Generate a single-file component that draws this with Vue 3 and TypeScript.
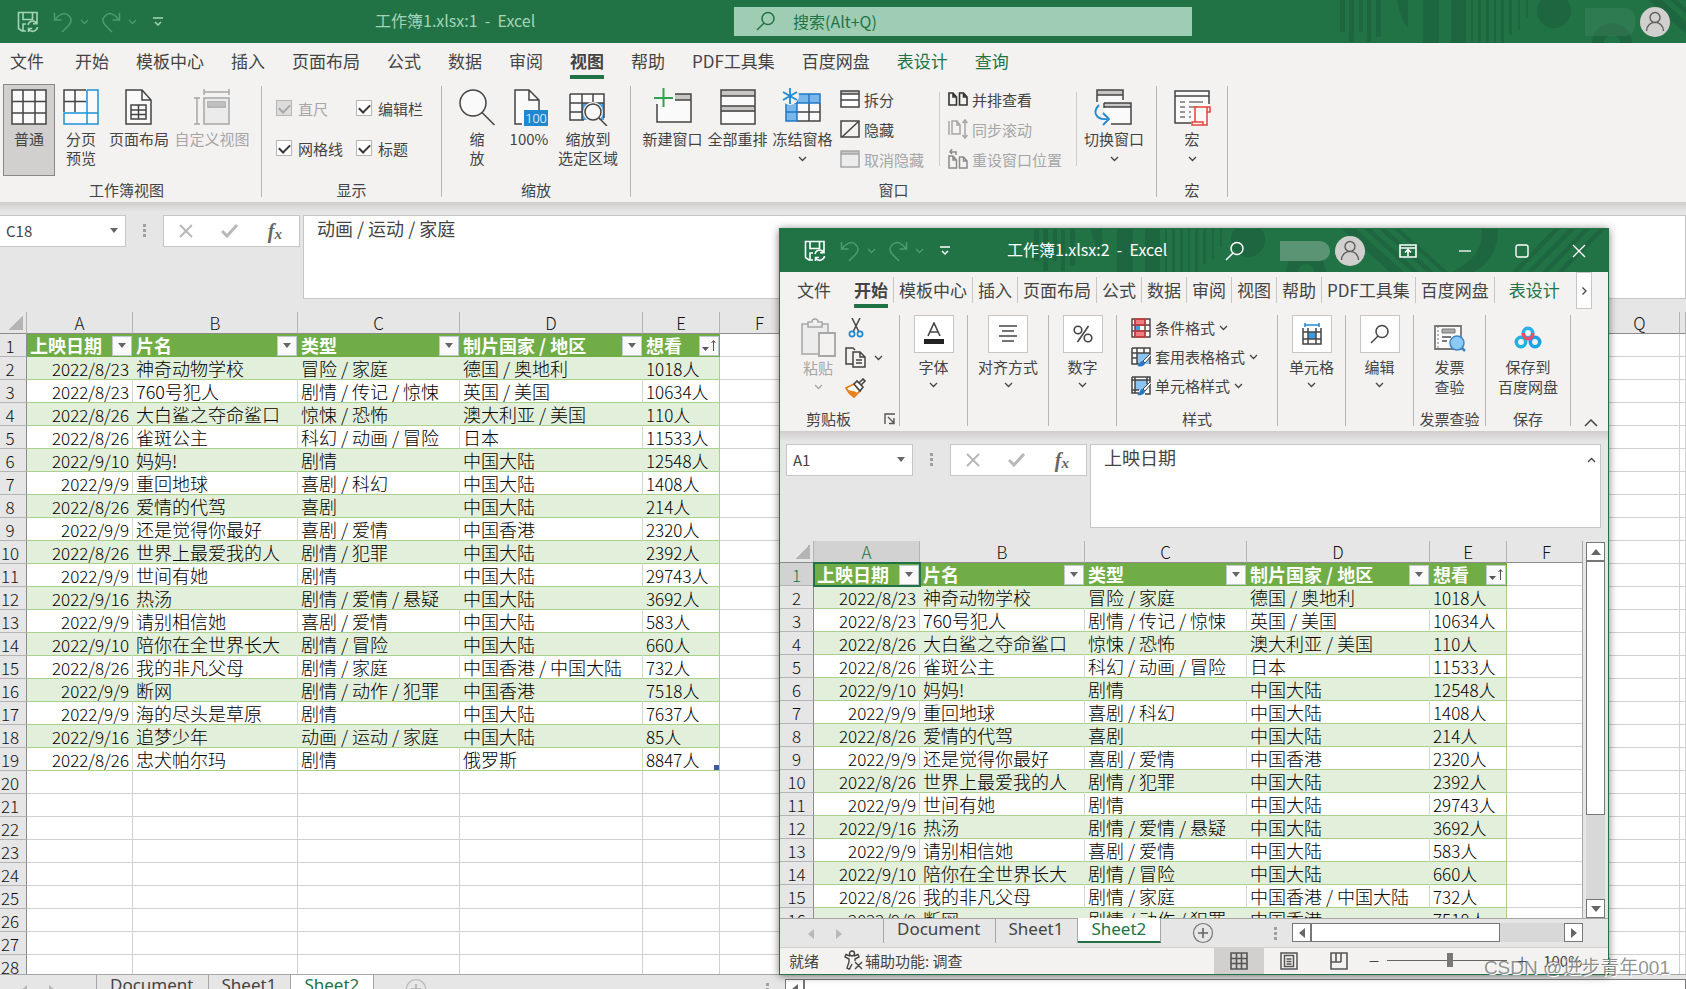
<script setup lang="ts">
import { defineComponent, h, ref } from 'vue'

interface Movie { date: string; name: string; kind: string; area: string; want: string }

const raw: string[] = [
  '2022/8/23|神奇动物学校|冒险 / 家庭|德国 / 奥地利|1018人',
  '2022/8/23|760号犯人|剧情 / 传记 / 惊悚|英国 / 美国|10634人',
  '2022/8/26|大白鲨之夺命鲨口|惊悚 / 恐怖|澳大利亚 / 美国|110人',
  '2022/8/26|雀斑公主|科幻 / 动画 / 冒险|日本|11533人',
  '2022/9/10|妈妈!|剧情|中国大陆|12548人',
  '2022/9/9|重回地球|喜剧 / 科幻|中国大陆|1408人',
  '2022/8/26|爱情的代驾|喜剧|中国大陆|214人',
  '2022/9/9|还是觉得你最好|喜剧 / 爱情|中国香港|2320人',
  '2022/8/26|世界上最爱我的人|剧情 / 犯罪|中国大陆|2392人',
  '2022/9/9|世间有她|剧情|中国大陆|29743人',
  '2022/9/16|热汤|剧情 / 爱情 / 悬疑|中国大陆|3692人',
  '2022/9/9|请别相信她|喜剧 / 爱情|中国大陆|583人',
  '2022/9/10|陪你在全世界长大|剧情 / 冒险|中国大陆|660人',
  '2022/8/26|我的非凡父母|剧情 / 家庭|中国香港 / 中国大陆|732人',
  '2022/9/9|断网|剧情 / 动作 / 犯罪|中国香港|7518人',
  '2022/9/9|海的尽头是草原|剧情|中国大陆|7637人',
  '2022/9/16|追梦少年|动画 / 运动 / 家庭|中国大陆|85人',
  '2022/8/26|忠犬帕尔玛|剧情|俄罗斯|8847人',
]
const movies: Movie[] = raw.map((line) => {
  const [date, name, kind, area, want] = line.split('|')
  return { date, name, kind, area, want }
})
const fields = ['上映日期', '片名', '类型', '制片国家 / 地区', '想看']
const mainTail = ['F', 'G', 'H', 'I', 'J', 'K', 'L', 'M', 'N', 'O', 'P', 'Q', '']
const letters = ['A', 'B', 'C', 'D', 'E']
const mainTabs = ['文件', '开始', '模板中心', '插入', '页面布局', '公式', '数据', '审阅', '视图', '帮助', 'PDF工具集', '百度网盘', '表设计', '查询']
const subTabs = ['开始', '模板中心', '插入', '页面布局', '公式', '数据', '审阅', '视图', '帮助', 'PDF工具集', '百度网盘']
const sheets = ['Document', 'Sheet1', 'Sheet2']
const showBar = ref(true)
const showGrid = ref(true)
const showHeads = ref(true)
const zoom = ref(53)

const K = 'stroke="#444" stroke-width="1.5" fill="none"'
const G = 'stroke="#a6a6a6" stroke-width="1.5" fill="none"'
const icons: Record<string, [number, number, string]> = {
  save: [22, 22, '<g fill="none" stroke="currentColor" stroke-width="1.6"><path d="M9 20H5L1.500 17.500V1.500H20V9M6 2V8.500H15.500V2M6 20V13H9"/><path d="M11 14A4.800 4.800 0 0 1 19.500 12M20 9V12.800H16M20.500 16A4.800 4.800 0 0 1 12 18.500M11.500 21V17.500H15.200"/></g>'],
  undo: [20, 22, '<path d="M1.500 2V9H8.500M2 9C6 3 11 1 15 4C20 8 18 12 15 15L9 21" fill="none" stroke="currentColor" stroke-width="1.500"/>'],
  redo: [20, 22, '<path d="M18.500 2V9H11.500M18 9C14 3 9 1 5 4C0 8 2 12 5 15L11 21" fill="none" stroke="currentColor" stroke-width="1.500"/>'],
  chev: [9, 6, '<path d="M1 1L4.500 4.500L8 1" fill="none" stroke="currentColor" stroke-width="1.300"/>'],
  up: [14, 8, '<path d="M1 7L7 1L13 7" fill="none" stroke="currentColor" stroke-width="1.500"/>'],
  custom: [12, 10, '<path d="M1 1H11M3 5L6 8L9 5" fill="none" stroke="currentColor" stroke-width="1.500"/>'],
  search: [20, 20, '<g fill="none" stroke="currentColor" stroke-width="1.500"><circle cx="12" cy="7.500" r="6"/><path d="M8 12L1 19"/></g>'],
  user: [30, 30, '<circle cx="15" cy="15" r="15" fill="#d2d0ce"/><g fill="none" stroke="#605e5c" stroke-width="1.400"><circle cx="15" cy="10.500" r="5"/><path d="M6.500 24C7 12.500 23 12.500 23.500 24"/></g>'],
  normal: [38, 38, `<path d="M2 2H36V36H2Z" fill="#fafafa"/><path d="M2 2H36V36H2ZM13 2V36M25 2V36M2 13.500H36M2 25H36" ${K}/>`],
  pages: [38, 38, `<path d="M2 2H36V36H2Z" fill="#fafafa"/><path d="M24 2H2V24M13 2V24M2 13.500H24" ${K}/><path d="M25 2H36V36H2V25H36M25 2V36" stroke="#1e91d6" stroke-width="1.500" fill="none"/>`],
  layout: [38, 38, `<path d="M6 2H22L31 12V36H6Z" fill="#fafafa"/><path d="M6 2H22L31 12V36H6ZM22 2V12H31" ${K}/><path d="M11 17H26V31H11ZM18.500 17V31M11 22H26M11 26.500H26" ${K}/>`],
  custview: [38, 38, `<path d="M10 10H36V36H10Z" fill="#ebebeb"/><path d="M11 10H36V36H11ZM15 14H32V19H15ZM11 4H36M11 1V7M36 1V7M4 10V36M1 10H7M1 36H7" ${G}/><path d="M15 14H32V18H15Z" fill="#c0c0c0"/>`],
  zoomer: [36, 38, `<ellipse cx="14" cy="15" rx="13" ry="13" fill="#fafafa"/><circle cx="14" cy="15" r="13" ${K}/><path d="M23 24.500L35.500 37" ${K}/>`],
  hundred: [38, 38, `<path d="M5 2H19L29 12V36H5Z" fill="#fafafa"/><path d="M12 36H5V2H19L29 12V22M19 2V12H29" ${K}/><path d="M14 22H38V38H14Z" fill="#2088cf"/><text x="26" y="35" fill="#fff" font-size="13" font-weight="300" text-anchor="middle" font-family="Roboto, sans-serif">100</text>`],
  zoomsel: [40, 38, `<path d="M2 6H36V32H2Z" fill="#fafafa"/><path d="M14 15H36V32H14Z" fill="#4aa0e0"/><path d="M2 6H36V15M14 6V32M25 6V15M2 15H36M2 24H14M2 6V32H16M36 15V30" ${K}/><circle cx="25" cy="24" r="10" fill="#f3f2f1"/><circle cx="25" cy="24" r="8" fill="#fafafa"/><circle cx="25" cy="24" r="8" ${K}/><path d="M31 30L39 38" ${K}/>`],
  newwin: [42, 38, `<path d="M5 12V34H39V6H23V12H39" fill="#fafafa"/><path d="M23 6H39V12H23Z" fill="#c8c6c4"/><path d="M5 16V34H39V6H23M23 12H39" ${K}/><path d="M2 10H21M11.500 0V19" stroke="#2da44e" stroke-width="2"/>`],
  arrange: [38, 38, `<path d="M2 2H36V36H2Z" fill="#fafafa"/><path d="M2 2H36V8H2ZM2 18H36V24H2Z" fill="#c8c6c4"/><path d="M2 2H36V36H2ZM2 8H36M2 18H36M2 23H36" ${K}/>`],
  freeze: [42, 38, `<path d="M4 6H38V33H4Z" fill="#fafafa"/><path d="M15 6H38V15H15ZM4 15H15V33H4Z" fill="#79b7ea"/><path d="M15 33H38V15M15 24H38M27 15V33" ${K}/><path d="M16 6H38V15H4V33H15V6M27 6V15M4 24H15" stroke="#1f78c8" stroke-width="1.500" fill="none"/><circle cx="8" cy="8" r="9" fill="#f3f2f1"/><path d="M8 0V16M1 4L15 12M1 12L15 4" stroke="#2088cf" stroke-width="1.800"/>`],
  split: [20, 20, `<path d="M1 2H19V18H1Z" fill="#fff"/><path d="M1 2H19V5H1Z" fill="#c8c6c4"/><path d="M1 2H19V18H1ZM1 5H19M1 11H19" ${K}/>`],
  hide: [20, 20, `<path d="M1 2H19V18H1ZM2 18L18 3" ${K}/>`],
  unhide: [20, 20, `<path d="M1 2H19V18H1Z" fill="#ececec"/><path d="M1 2H19V5H1Z" fill="#c8c6c4"/><path d="M1 2H19V18H1ZM1 5H19" ${G}/>`],
  side: [20, 20, `<path d="M1 4H5L8.500 8V16H1ZM5 4V8H8.500M11.500 4H15.500L19 8V16H11.500ZM15.500 4V8H19" stroke="#333" stroke-width="1.600" fill="none"/>`],
  sync: [20, 20, `<path d="M1 2V16M4 2H9L12 6V15H4ZM9 2V6H12M17 1V19M14.500 4L17 1L19.500 4M14.500 16L17 19L19.500 16" ${G}/>`],
  reset: [20, 20, `<path d="M1 7H5L8.500 11V19H1ZM5 7V11H8.500M11.500 8H15.500L19 12V19H11.500ZM15.500 8V12H19M2 3H8V6M4 0L2 3L4 5" stroke="#8a8a8a" stroke-width="1.500" fill="none"/>`],
  switchw: [42, 38, `<path d="M4 2H30V17H12V24" fill="#fafafa"/><path d="M4 2H30V7H4ZM12 15H38V19H12Z" fill="#c8c6c4"/><path d="M12 19H38V36H12Z" fill="#fafafa"/><path d="M4 14V2H30V12M4 7H30M11 15H38V36H18M11 15V20M11 19H38" ${K}/><path d="M6 17C-1 24 3 32 14 31M10 25L16 31L10 37" stroke="#2088cf" stroke-width="1.800" fill="none"/>`],
  macro: [38, 38, `<path d="M2 3H36V35H2Z" fill="#fafafa"/><path d="M36 16V3H2V35H18M2 8H36" ${K}/><path d="M7 14H12M16 14H30M7 19H12M16 19H24M7 24H12M16 24H18M7 29H12M16 29H18" stroke="#777" stroke-width="1.500"/><path d="M22 34V19H37V24H34V37H19V34H30V37M34 19V24" stroke="#e8403a" stroke-width="1.500" fill="#fafafa"/>`],
  x: [16, 14, '<path d="M2 1L14 13M14 1L2 13" stroke="#b8b8b8" stroke-width="2"/>'],
  ok: [18, 14, '<path d="M1 7L6 12L16 1" stroke="#b8b8b8" stroke-width="3" fill="none"/>'],
  drop: [8, 5, '<path d="M0 0H8L4 5Z" fill="#666"/>'],
  tl: [6, 10, '<path d="M6 0V10L0 5Z" fill="currentColor"/>'],
  tr: [6, 10, '<path d="M0 0V10L6 5Z" fill="currentColor"/>'],
  tu: [10, 6, '<path d="M0 6H10L5 0Z" fill="#666"/>'],
  td: [10, 6, '<path d="M0 0H10L5 6Z" fill="#666"/>'],
  sort: [16, 14, '<path d="M1 8H8L4.500 12Z" fill="#555"/><path d="M12.500 12V2M10.500 4L12.500 1.500L14.500 4" stroke="#555" fill="none"/>'],
  plus: [22, 22, '<circle cx="11" cy="11" r="9.500" fill="none" stroke="#777" stroke-width="1.200"/><path d="M6 11H16M11 6V16" stroke="#666" stroke-width="1.600"/>'],
  paste: [36, 40, `<path d="M2 6H28V36H2Z" fill="#ececec"/><path d="M18 36H2V6H8M22 6H28V14M8 9V4H12C12 0 18 0 18 4H22V9Z" ${G}/><path d="M19 15H35V38H19Z" fill="#f3f2f1" stroke="#a6a6a6" stroke-width="1.800"/>`],
  cut: [16, 20, '<path d="M4 0L11 14M12 0L5 14" stroke="#444" stroke-width="1.500"/><circle cx="4" cy="16" r="2.600" stroke="#2088cf" stroke-width="1.700" fill="none"/><circle cx="12" cy="16" r="2.600" stroke="#2088cf" stroke-width="1.700" fill="none"/>'],
  copy: [22, 22, `<path d="M8 17H1V1H8L10 3M8 5H15L20 10V20H8ZM15 5V10H20M11 13H17M11 16H17" ${K}/>`],
  brush: [22, 20, '<path d="M1 10L9 6L15 13L9 19C6 17 3 14 1 10Z" fill="#fff" stroke="#e8811a" stroke-width="1.800"/><path d="M3 12L12 14L9 19Z" fill="#e8811a"/><path d="M9 6L12 3L18 9L15 13ZM14 5L18 1L20 3L16 7" fill="#fff" stroke="#444" stroke-width="1.600"/>'],
  launch: [12, 12, '<path d="M1 11V1H11M4 4L10 10M10 5V10.500H5" stroke="#555" stroke-width="1.400" fill="none"/>'],
  font: [24, 24, '<path d="M6 14L12 1L18 14M8 10H16" stroke="#444" stroke-width="1.600" fill="none"/><path d="M2 17H22V22H2Z" fill="#222"/>'],
  align: [24, 24, '<path d="M3 4H21M6 9H18M3 14H21M6 19H18" stroke="#444" stroke-width="1.500"/>'],
  percent: [24, 24, '<g fill="none" stroke="#444" stroke-width="1.600"><circle cx="7" cy="8" r="3.800"/><circle cx="17" cy="16" r="3.800"/><path d="M17.500 4L6.500 20"/></g>'],
  cells: [24, 24, '<path d="M3 6H21V22H3Z" fill="#fafafa"/><path d="M8 10H16V17H8Z" fill="#3d9be0"/><path d="M3 6V22H21V6M3 10H21M3 17H21M8 6V22M16 6V22" stroke="#444" stroke-width="1.500" fill="none"/><path d="M5 3H19M5 1V5M19 1V5" stroke="#2088cf" stroke-width="1.500"/>'],
  cond: [20, 20, '<path d="M1 1H19V19H1Z" fill="#fff"/><path d="M4 1H14V7H4ZM4 13H14V19H4Z" fill="#f08080"/><path d="M4 7H9V13H4Z" fill="#4a9be0"/><path d="M1 1H19V19H1ZM4 1V19M14 1V19M1 7H19M1 13H19" stroke="#444" stroke-width="1.400" fill="none"/><path d="M4 1H14V7H4ZM4 13H14V19H4Z" stroke="#d83b3b" stroke-width="1.400" fill="none"/>'],
  tstyle: [20, 20, '<path d="M1 1H19V17H1Z" fill="#fff"/><path d="M6 6H19V17H6Z" fill="#8cc4f0"/><path d="M1 1H19V17M1 1V17H8M6 1V17M13 1V6M1 6H19M1 11H6" stroke="#444" stroke-width="1.500" fill="none"/><path d="M19 7L12 14L14 16L20 9" fill="#fff" stroke="#444"/><path d="M11 14C8 15 9 18 6 19C10 20 14 19 14 16Z" fill="#1f78c8"/>'],
  cstyle: [20, 20, '<path d="M1 1H19V17H1Z" fill="#fff"/><path d="M4 4H16V14H4Z" fill="#8cc4f0"/><path d="M1 1H19V18H14M1 1V17H8M4 1V17M1 4H19M16 1V8M1 14H8" stroke="#444" stroke-width="1.500" fill="none"/><path d="M19 6L12 13L14 15L20 8" fill="#fff" stroke="#444"/><path d="M11 13C8 14 9 18 6 19C10 20 14 18 14 15Z" fill="#1f78c8"/>'],
  invoice: [34, 28, '<path d="M2 2H28V25H2Z" fill="#fafafa" stroke="#777" stroke-width="1.800"/><path d="M5 2V25" stroke="#777" stroke-dasharray="2 2"/><path d="M9 5H22V9H9Z" fill="#aaa" stroke="#777"/><path d="M9 13H18M9 17H14" stroke="#777" stroke-width="1.800"/><path d="M28 23L32 27" stroke="#3b86c8" stroke-width="2.500"/><circle cx="24" cy="19" r="7" fill="#8cc8f8" stroke="#3b86c8" stroke-width="1.500"/>'],
  baidu: [28, 24, '<g fill="none" stroke-width="3.600"><circle cx="7" cy="16" r="4.700" stroke="#1fb4e0"/><circle cx="21" cy="16" r="4.700" stroke="#1ba0ea"/><circle cx="14" cy="7" r="4.700" stroke="#2bb0ee"/><path d="M9.300 7V8A4.700 4.700 0 0 0 18.700 8V7" stroke="#e8506a"/></g>'],
  ribbonopt: [18, 16, '<path d="M1 2H17V14H1ZM1 5H17" fill="none" stroke="#fff" stroke-width="1.600"/><path d="M9 13V7M6 9.500L9 6.500L12 9.500" fill="none" stroke="#fff" stroke-width="1.600"/>'],
  min: [14, 14, '<path d="M1 7H13" stroke="#fff" stroke-width="1.300"/>'],
  max: [14, 14, '<rect x="1" y="1" width="12" height="12" rx="2" fill="none" stroke="#fff" stroke-width="1.400"/>'],
  close: [14, 14, '<path d="M1 1L13 13M13 1L1 13" stroke="#fff" stroke-width="1.400"/>'],
  access: [20, 20, '<g fill="none" stroke="#444" stroke-width="1.400"><circle cx="8" cy="3.500" r="2.500"/><path d="M6 6L2 4.500L1 7L5 9V12L3 18L5.500 19L8 14M10 6L14 4.500L15 7L11 9V11M11 12L18 19M18 12L11 19"/></g>'],
  vnormal: [18, 18, '<path d="M1 1H17V17H1ZM6.500 1V17M11.500 1V17M1 6.500H17M1 11.500H17" fill="none" stroke="#555" stroke-width="1.600"/>'],
  vpage: [18, 18, '<path d="M1 1H17V17H1ZM4.500 3.500H13.500V14.500H4.500ZM6.500 7H11.500M6.500 9.500H11.500M6.500 12H11.500" fill="none" stroke="#555" stroke-width="1.500"/>'],
  vbreak: [18, 18, '<path d="M1 1H17V17H1ZM6 1V10M11 1V10M1 10H11" fill="none" stroke="#555" stroke-width="1.600"/>'],
  decor: [580, 43, '<g fill="#0f3d2a" fill-opacity=".24"><path d="M0 0H5V32H0ZM9 0H14V42H9ZM19 0H23V32H19ZM27 0H31V42H27ZM36 0H41V37H36ZM57 0H68V28Q60 18 57 0ZM83 0H99V43H83ZM111 0H126V43H111ZM131 0H133V43H131ZM138 0H141V43H138ZM146 0H149V43H146ZM154 0H156V43H154ZM161 0H164V43H161ZM169 0H172V35H169ZM178 0H180V30H178ZM186 0H188V18H186Z"/><circle cx="214" cy="11" r="17"/><path d="M252 43A20 20 0 0 1 292 43H280A8 8 0 0 0 264 43Z"/><path d="M308 0H322L370 43H356ZM330 0H337L385 43H378ZM345 0H352L400 43H393ZM360 0H366L414 43H408Z"/><path d="M448 0H464Q464 30 440 43H418Q450 28 448 0ZM478 43L520 0H526L484 43ZM493 43L535 0H541L499 43ZM508 43L550 0H556L514 43ZM523 43L565 0H571L529 43Z"/></g>'],
}
const Ico = defineComponent({
  props: { n: { type: String, required: true } },
  setup(p) {
    return () => {
      const [w, ht, body] = icons[p.n]
      return h('svg', { width: w, height: ht, viewBox: `0 0 ${w} ${ht}`, 'aria-hidden': 'true', innerHTML: body })
    }
  },
})
</script>

<template>
  <div class="desk">
    <section class="win">
      <header class="title inactive">
        <Ico n="decor" class="decor" />
        <div class="quick">
          <button aria-label="保存"><Ico n="save" /></button>
          <button class="dim undo" aria-label="撤消"><Ico n="undo" /><Ico n="chev" /></button>
          <button class="dim redo" aria-label="恢复"><Ico n="redo" /><Ico n="chev" /></button>
          <button aria-label="自定义"><Ico n="custom" /></button>
        </div>
        <h1 class="name">工作簿1.xlsx:1&nbsp; -&nbsp; Excel</h1>
        <label class="find"><Ico n="search" /><input type="text" placeholder="搜索(Alt+Q)" aria-label="搜索" /></label>
        <span class="mask faint"></span>
        <button class="user" aria-label="帐户"><Ico n="user" /></button>
      </header>
      <nav class="tabs">
        <button v-for="t in mainTabs" :key="t" :class="{ on: t === '视图', ctx: t === '表设计' || t === '查询' }">{{ t }}</button>
      </nav>
      <div class="ribbon">
        <div class="group g-view">
          <div class="body">
            <button class="big w52 pressed"><Ico n="normal" /><span>普通</span></button>
            <button class="big w52"><Ico n="pages" /><span>分页<br />预览</span></button>
            <button class="big w64"><Ico n="layout" /><span>页面布局</span></button>
            <button class="big w82 off" disabled><Ico n="custview" /><span>自定义视图</span></button>
          </div>
          <div class="cap">工作簿视图</div>
        </div>
        <i class="sep"></i>
        <div class="group g-show">
          <div class="body checks">
            <label class="off"><input type="checkbox" checked disabled />直尺</label>
            <label><input v-model="showBar" type="checkbox" />编辑栏</label>
            <label><input v-model="showGrid" type="checkbox" />网格线</label>
            <label><input v-model="showHeads" type="checkbox" />标题</label>
          </div>
          <div class="cap">显示</div>
        </div>
        <i class="sep"></i>
        <div class="group g-zoom">
          <div class="body">
            <button class="big w46"><Ico n="zoomer" /><span>缩<br />放</span></button>
            <button class="big w58"><Ico n="hundred" /><span>100%</span></button>
            <button class="big w60"><Ico n="zoomsel" /><span>缩放到<br />选定区域</span></button>
          </div>
          <div class="cap">缩放</div>
        </div>
        <i class="sep"></i>
        <div class="group g-win">
          <div class="body">
            <button class="big w65"><Ico n="newwin" /><span>新建窗口</span></button>
            <button class="big w65"><Ico n="arrange" /><span>全部重排</span></button>
            <button class="big w65"><Ico n="freeze" /><span>冻结窗格</span><Ico n="chev" class="cv" /></button>
            <div class="smalls">
              <button><Ico n="split" />拆分</button>
              <button><Ico n="hide" />隐藏</button>
              <button class="off" disabled><Ico n="unhide" />取消隐藏</button>
            </div>
            <i class="sep inner"></i>
            <div class="smalls second">
              <button><Ico n="side" />并排查看</button>
              <button class="off" disabled><Ico n="sync" />同步滚动</button>
              <button class="off" disabled><Ico n="reset" />重设窗口位置</button>
            </div>
            <i class="sep inner"></i>
            <button class="big w74"><Ico n="switchw" /><span>切换窗口</span><Ico n="chev" class="cv" /></button>
          </div>
          <div class="cap">窗口</div>
        </div>
        <i class="sep"></i>
        <div class="group g-macro">
          <div class="body">
            <button class="big w70"><Ico n="macro" /><span>宏</span><Ico n="chev" class="cv" /></button>
          </div>
          <div class="cap">宏</div>
        </div>
        <i class="sep"></i>
      </div>
      <div class="fbar">
        <div class="nbox"><input value="C18" aria-label="名称框" /><button aria-label="名称列表"><Ico n="drop" /></button></div>
        <i class="dots"></i>
        <div class="fxbox"><button aria-label="取消"><Ico n="x" /></button><button aria-label="输入"><Ico n="ok" /></button><button class="fx" aria-label="插入函数">f<sub>x</sub></button></div>
        <textarea class="formula" aria-label="编辑栏" value="动画 / 运动 / 家庭"></textarea>
      </div>
      <div class="grid">
        <table class="sheet">
          <colgroup><col class="rh" /><col class="ca" /><col class="cb" /><col class="cc" /><col class="cd" /><col class="ce" /><col v-for="c in mainTail" :key="c" :class="{ cf: c }" /></colgroup>
          <thead>
            <tr><th class="corner"></th><th v-for="c in letters.concat(mainTail)" :key="c">{{ c }}</th></tr>
          </thead>
          <tbody>
            <tr class="fields">
              <th>1</th>
              <td v-for="(f, i) in fields" :key="f"><div>{{ f }}<button :aria-label="'筛选 ' + f"><Ico :n="i === 4 ? 'sort' : 'drop'" /></button></div></td>
              <td v-for="c in mainTail" :key="c"></td>
            </tr>
            <tr v-for="(m, i) in movies" :key="m.name" class="rec" :class="{ band: i % 2 === 0 }">
              <th>{{ i + 2 }}</th>
              <td class="date">{{ m.date }}</td><td>{{ m.name }}</td><td>{{ m.kind }}</td><td>{{ m.area }}</td><td class="num" :class="{ endmark: i === 17 }">{{ m.want }}</td>
              <td v-for="c in mainTail" :key="c"></td>
            </tr>
            <tr v-for="r in 9" :key="r"><th>{{ r + 19 }}</th><td v-for="c in 18" :key="c"></td></tr>
          </tbody>
        </table>
      </div>
      <footer class="books">
        <span class="arrows"><Ico n="tl" /><Ico n="tr" /></span>
        <button v-for="s in sheets" :key="s" class="stab" :class="{ on: s === 'Sheet2' }">{{ s }}</button>
        <button class="add faded" aria-label="新工作表"><Ico n="plus" /></button>
        <i class="dots"></i>
        <div class="hbar wide"><button aria-label="向左"><Ico n="tl" /></button><div class="thumb"></div></div>
      </footer>
    </section>

    <section class="win float">
      <header class="title">
        <Ico n="decor" class="decor" />
        <div class="quick">
          <button aria-label="保存"><Ico n="save" /></button>
          <button class="dim undo" aria-label="撤消"><Ico n="undo" /><Ico n="chev" /></button>
          <button class="dim redo" aria-label="恢复"><Ico n="redo" /><Ico n="chev" /></button>
          <button aria-label="自定义"><Ico n="custom" /></button>
        </div>
        <h2 class="name">工作簿1.xlsx:2&nbsp; -&nbsp; Excel</h2>
        <button class="lens" aria-label="搜索"><Ico n="search" /></button>
        <span class="mask"></span>
        <button class="user" aria-label="帐户"><Ico n="user" /></button>
        <div class="ctl">
          <button aria-label="功能区显示选项"><Ico n="ribbonopt" /></button>
          <button aria-label="最小化"><Ico n="min" /></button>
          <button aria-label="最大化"><Ico n="max" /></button>
          <button aria-label="关闭"><Ico n="close" /></button>
        </div>
      </header>
      <nav class="tabs tight">
        <button class="file">文件</button>
        <span v-for="t in subTabs" :key="t" class="slot"><button :class="{ on: t === '开始' }">{{ t }}</button></span>
        <button class="ctx">表设计</button>
        <button class="more" aria-label="更多"><Ico n="chev" /></button>
      </nav>
      <div class="ribbon">
        <div class="group f-clip">
          <div class="body clip">
            <button class="pastebtn off" disabled><Ico n="paste" /><span>粘贴</span><Ico n="chev" /></button>
            <div class="cliptools">
              <button aria-label="剪切"><Ico n="cut" /></button>
              <button aria-label="复制"><Ico n="copy" /><Ico n="chev" /></button>
              <button aria-label="格式刷"><Ico n="brush" /></button>
            </div>
          </div>
          <div class="cap">剪贴板<button aria-label="剪贴板选项"><Ico n="launch" /></button></div>
        </div>
        <i class="sep"></i>
        <div class="group"><div class="body"><button class="boxed w67"><b><Ico n="font" /></b>字体<Ico n="chev" /></button></div></div>
        <i class="sep"></i>
        <div class="group"><div class="body"><button class="boxed w80"><b><Ico n="align" /></b>对齐方式<Ico n="chev" /></button></div></div>
        <i class="sep"></i>
        <div class="group"><div class="body"><button class="boxed w67"><b><Ico n="percent" /></b>数字<Ico n="chev" /></button></div></div>
        <i class="sep"></i>
        <div class="group f-style">
          <div class="body styles">
            <button><Ico n="cond" />条件格式<Ico n="chev" /></button>
            <button><Ico n="tstyle" />套用表格格式<Ico n="chev" /></button>
            <button><Ico n="cstyle" />单元格样式<Ico n="chev" /></button>
          </div>
          <div class="cap">样式</div>
        </div>
        <i class="sep"></i>
        <div class="group"><div class="body"><button class="boxed w67"><b><Ico n="cells" /></b>单元格<Ico n="chev" /></button></div></div>
        <i class="sep"></i>
        <div class="group"><div class="body"><button class="boxed w67"><b><Ico n="search" /></b>编辑<Ico n="chev" /></button></div></div>
        <i class="sep"></i>
        <div class="group">
          <div class="body"><button class="plug w71"><Ico n="invoice" /><span>发票<br />查验</span></button></div>
          <div class="cap">发票查验</div>
        </div>
        <i class="sep"></i>
        <div class="group">
          <div class="body"><button class="plug w84"><Ico n="baidu" /><span>保存到<br />百度网盘</span></button></div>
          <div class="cap">保存</div>
        </div>
        <i class="sep"></i>
        <button class="fold" aria-label="折叠功能区"><Ico n="up" /></button>
      </div>
      <div class="fbar">
        <div class="nbox"><input value="A1" aria-label="名称框" /><button aria-label="名称列表"><Ico n="drop" /></button></div>
        <i class="dots"></i>
        <div class="fxbox"><button aria-label="取消"><Ico n="x" /></button><button aria-label="输入"><Ico n="ok" /></button><button class="fx" aria-label="插入函数">f<sub>x</sub></button></div>
        <div class="fwrap"><textarea class="formula" aria-label="编辑栏" value="上映日期"></textarea><button aria-label="折叠编辑栏"><Ico n="chev" /></button></div>
      </div>
      <div class="pane">
        <div class="grid">
          <table class="sheet">
            <colgroup><col class="rh" /><col class="ca" /><col class="cb" /><col class="cc" /><col class="cd" /><col class="ce" /><col class="cf" /></colgroup>
            <thead>
              <tr><th class="corner"></th><th v-for="c in letters" :key="c" :class="{ sel: c === 'A' }">{{ c }}</th><th>F</th></tr>
            </thead>
            <tbody>
              <tr class="fields">
                <th class="sel">1</th>
                <td v-for="(f, i) in fields" :key="f" :class="{ cur: i === 0 }"><div>{{ f }}<button :aria-label="'筛选 ' + f"><Ico :n="i === 4 ? 'sort' : 'drop'" /></button></div></td>
                <td></td>
              </tr>
              <tr v-for="(m, i) in movies.slice(0, 15)" :key="m.name" class="rec" :class="{ band: i % 2 === 0 }">
                <th>{{ i + 2 }}</th>
                <td class="date">{{ m.date }}</td><td>{{ m.name }}</td><td>{{ m.kind }}</td><td>{{ m.area }}</td><td class="num">{{ m.want }}</td><td></td>
              </tr>
            </tbody>
          </table>
        </div>
        <div class="vbar"><button aria-label="向上"><Ico n="tu" /></button><div class="thumb"></div><div class="track"></div><button aria-label="向下"><Ico n="td" /></button></div>
      </div>
      <footer class="books">
        <span class="arrows"><Ico n="tl" /><Ico n="tr" /></span>
        <button v-for="s in sheets" :key="s" class="stab" :class="{ on: s === 'Sheet2' }">{{ s }}</button>
        <button class="add" aria-label="新工作表"><Ico n="plus" /></button>
        <i class="dots"></i>
        <div class="hbar"><button aria-label="向左"><Ico n="tl" /></button><div class="thumb"></div><div class="track"></div><button aria-label="向右"><Ico n="tr" /></button></div>
      </footer>
      <div class="status">
        <span>就绪</span>
        <button class="acc"><Ico n="access" />辅助功能: 调查</button>
        <div class="views">
          <button class="on" aria-label="普通"><Ico n="vnormal" /></button>
          <button aria-label="页面布局"><Ico n="vpage" /></button>
          <button aria-label="分页预览"><Ico n="vbreak" /></button>
        </div>
        <button class="step" aria-label="缩小">−</button>
        <input v-model="zoom" type="range" min="0" max="100" aria-label="缩放" />
        <button class="step" aria-label="放大">+</button>
        <span class="pct">100%</span>
      </div>
    </section>
    <div class="credit">CSDN @进步青年001</div>
  </div>
</template>

<style>
body { overflow: hidden; }
</style>

<style scoped>
.desk, .desk * { box-sizing: border-box; }
.desk { position: relative; height: 100vh; overflow: hidden; font: 15px/19px "Noto Sans CJK SC", "Noto Sans", sans-serif; color: #444; }
button { border: 0; padding: 0; background: none; font: inherit; color: inherit; white-space: nowrap; }
input, textarea { font: inherit; color: inherit; border: 0; padding: 0; outline: 0; background: none; }
svg { display: block; flex: none; }
.win { display: flex; flex-direction: column; height: 100%; background: #f3f2f1; }
.float { position: absolute; left: 779px; top: 228px; width: 830px; height: 747px; border: 1px solid #217346; box-shadow: 0 1px 8px rgba(0, 0, 0, .5); }

.title { position: relative; flex: none; height: 43px; background: #217346; color: #fff; display: flex; align-items: center; overflow: hidden; }
.title.inactive { color: #a5d3b5; }
.decor { position: absolute; left: 1340px; top: 0; }
.float .decor { left: 254px; }
.title > *:not(.decor) { position: relative; }
.quick { display: flex; align-items: center; width: 375px; padding-left: 17px; flex: none; }
.float .quick { width: 227px; padding-left: 24px; }
.quick button { display: flex; align-items: center; }
.quick .dim { color: #4c9c6c; gap: 7px; }
.undo { margin-left: 14px; }
.redo { margin: 0 15px 0 12px; }
.name { margin: 0 0 3px; font-size: 16px; font-weight: 400; line-height: 20px; width: 359px; white-space: nowrap; flex: none; }
.float .name { width: 218px; }
.find { flex: none; width: 458px; height: 29px; background: #9fcdb3; color: #217346; display: flex; align-items: center; gap: 17px; padding: 0 0 1px 22px; font-size: 16px; }
.find input { flex: 1; }
.find input::placeholder { color: #217346; opacity: 1; }
.mask { width: 50px; height: 20px; border-radius: 0 10px 10px 0; background: #5a9474; margin: 0 5px 0 35px; flex: none; }
.mask.faint { margin-left: auto; height: 28px; opacity: .25; }
.inactive .user { margin-right: 16px; }
.ctl { display: flex; margin-left: auto; }
.ctl button { width: 57px; display: grid; place-items: center; }
.float .title { padding-right: 1px; }

.tabs { display: flex; flex: none; height: 36px; margin-bottom: 5px; gap: 27px; padding-left: 10px; font-size: 17px; }
.tabs button { height: 36px; line-height: 34px; padding-bottom: 1px; }
.tabs button:first-child { margin-right: 4px; }
.tabs .on { font-weight: 700; box-shadow: inset 0 -4px #217346; }
.tabs .ctx { color: #217346; }
.tabs.tight { gap: 0; padding-left: 17px; }
.tabs.tight .file { margin-right: 18px; }
.slot { display: flex; padding: 0 5px; border-right: 1px solid transparent; border-image: linear-gradient(transparent 15%, #c8c6c4 15%, #c8c6c4 85%, transparent 85%) 1; }
.tabs .slot button { margin: 0; }
.tabs.tight .ctx { margin-left: 14px; }
.tabs .more { margin-left: auto; margin-right: 16px; width: 16px; height: 37px; padding: 0; border: 1px solid #c8c6c4; background: #fff; display: grid; place-items: center; }
.more svg { transform: rotate(-90deg); }

.ribbon { display: flex; flex: none; height: 118px; }
.sep { flex: none; width: 1px; background: #b8b6b4; margin: 2px 0 5px; }
.sep.inner { align-self: stretch; background: #d0cecc; margin: 8px 0 14px; }
.group { display: flex; flex-direction: column; flex: none; }
.body { height: 96px; display: flex; align-items: flex-start; }
.cap { height: 19px; text-align: center; white-space: nowrap; }
.g-view { width: 261px; }
.g-view .body { padding-left: 3px; }
.g-view .cap { padding-right: 8px; }
.g-show { width: 179px; }
.g-zoom { width: 188px; }
.g-zoom .body { padding-left: 12px; }
.g-win { width: 525px; }
.g-win .body { padding-left: 9px; }
.g-macro { width: 70px; }
.big { height: 92px; display: flex; flex-direction: column; align-items: center; padding-top: 4px; line-height: 19px; }
.big span { margin-top: 3px; }
.cv { margin-top: 8px; }
.pressed { background: #d2d0ce; box-shadow: inset 0 0 0 1px #8a8886; }
.off { color: #a6a6a6; }
.w46 { width: 46px; } .w52 { width: 52px; } .w58 { width: 58px; } .w60 { width: 60px; } .w64 { width: 64px; }
.w65 { width: 65px; } .w67 { width: 67px; } .w70 { width: 70px; } .w71 { width: 71px; } .w74 { width: 74px; } .w80 { width: 80px; } .w82 { width: 82px; } .w84 { width: 84px; }
.checks { display: grid; grid-template: 40px 40px / 80px 1fr; padding: 4px 0 0 14px; }
.checks label { display: flex; align-items: center; gap: 6px; height: 40px; white-space: nowrap; }
.checks input { appearance: none; width: 16px; height: 16px; margin: 0; border: 1px solid #b8b6b4; background: #fff; display: grid; place-items: center; }
.checks input:checked::after { content: ""; width: 9px; height: 5px; border: solid #333; border-width: 0 0 2px 2px; transform: translateY(-1px) rotate(-45deg); }
.checks input:disabled { background: #dcdcdc; }
.checks input:disabled::after { border-color: #a6a6a6; }
.smalls { width: 104px; padding-left: 5px; }
.smalls.second { width: 136px; padding-left: 8px; }
.smalls button { display: flex; align-items: center; gap: 4px; height: 30px; }

.body.clip { padding-left: 20px; gap: 9px; }
.pastebtn { display: flex; flex-direction: column; align-items: center; padding-top: 5px; line-height: 19px; }
.pastebtn svg:last-child { margin-top: 7px; }
.cliptools button { display: flex; align-items: center; height: 30px; gap: 7px; }
.cliptools button:first-child { padding-left: 3px; }
.f-clip { width: 119px; }
.f-clip .cap { display: flex; align-items: center; justify-content: space-between; padding: 0 3px 0 26px; }
.boxed { display: flex; flex-direction: column; align-items: center; padding-top: 2px; line-height: 19px; }
.boxed b { display: grid; place-items: center; width: 40px; height: 38px; background: #fff; border: 1px solid #c8c6c4; margin-bottom: 4px; color: #444; font-weight: 400; }
.boxed svg:last-child { margin-top: 6px; }
.boxed b svg:last-child { margin: 0; }
.f-style { width: 160px; }
.styles { flex-direction: column; padding-left: 14px; }
.styles button { display: flex; align-items: center; gap: 4px; height: 29px; }
.plug { display: flex; flex-direction: column; align-items: center; padding-top: 11px; line-height: 20px; }
.plug svg { height: 28px; margin-bottom: 5px; }
.fold { margin: 106px 10px 0 auto; align-self: flex-start; }

.fbar { flex: none; display: flex; height: 110px; padding-top: 13px; align-items: flex-start; background: linear-gradient(#cfcdcc, #e6e6e6 10px); }
.float .fbar { padding: 13px 7px 0 6px; }
.nbox { width: 127px; height: 32px; background: #fff; border: 1px solid #c6c6c6; display: flex; align-items: center; flex: none; padding: 0 7px 1px 6px; margin-left: -1px; }
.float .nbox { margin-left: 0; }
.nbox input { flex: 1; min-width: 0; }
.fbar .dots { width: 37px; height: 31px; }
.dots { background: radial-gradient(circle, #a0a0a0 2px, transparent 2px) center top / 5px 5px repeat-y content-box; padding: 8px 0; flex: none; }
.fxbox { width: 137px; height: 32px; background: #fff; border: 1px solid #c6c6c6; display: flex; flex: none; margin-right: 3px; padding-right: 2px; }
.fxbox button { flex: 1; display: grid; place-items: center; }
.fxbox .fx { display: block; font: italic 700 20px/27px "Liberation Serif", serif; color: #666; }
.fx sub { font-size: 15px; line-height: 10px; vertical-align: -1px; }
.formula { display: block; flex: 1; width: 100%; height: 84px; background: #fff; border: 1px solid #c6c6c6; resize: none; font-size: 18px; line-height: 24px; padding: 0 13px; overflow: hidden; }
.fwrap { flex: 1; position: relative; }
.fwrap button { position: absolute; right: 5px; top: 13px; transform: rotate(180deg); }

.grid { flex: 1; min-height: 0; min-width: 0; overflow: hidden; background: #fff; }
.sheet { table-layout: fixed; width: 100%; border-collapse: separate; border-spacing: 0; color: #000; font-size: 18px; line-height: 20px; font-weight: 300; }
.rh { width: 27px; } .ca { width: 106px; } .cb { width: 165px; } .cc { width: 162px; } .cd { width: 183px; } .ce { width: 77px; } .cf { width: 80px; }
.float .rh { width: 34px; }
th { font-weight: inherit; padding: 1px 0 0; height: 23px; background: #e6e6e6; font-size: 17px; line-height: 21px; color: #111; white-space: nowrap; }
thead th { height: 22px; line-height: 20px; border-bottom: 1px solid #8c8c8c; border-right: 1px solid #b4b4b4; }
tbody th { border-right: 1px solid #8c8c8c; border-bottom: 1px solid #b4b4b4; padding-right: 6px; }
.float tbody th { padding-right: 0; }
.corner { background: linear-gradient(135deg, transparent 50%, #b4b4b4 50%) right 3px bottom 3px / 15px 15px no-repeat #e6e6e6; }
th.sel { background: #d2d2d2; color: #217346; }
td { height: 23px; padding: 1px 3px 0; line-height: 21px; border-right: 1px solid #d0d0d0; border-bottom: 1px solid #d0d0d0; white-space: nowrap; overflow: hidden; }
.rec td:nth-child(-n+6) { border-bottom-color: #a9d08e; border-right-color: #cfdcc8; }
.rec td:nth-child(6) { border-right-color: #a9d08e; }
.rec.band td:nth-child(-n+6) { background: #e2efda; border-right-color: #e2efda; }
.rec.band td:nth-child(6) { border-right-color: #a9d08e; }
.date, .num { font-size: 17px; }
.date { text-align: right; }
.fields td:nth-child(-n+6) { background: #70ad47; border-color: #70ad47; color: #fff; font-weight: 700; padding: 1px 0 0 3px; }
.fields div { display: flex; justify-content: space-between; align-items: center; height: 21px; }
.fields button { width: 20px; height: 20px; background: #fafafa; border: 1px solid #c0c8d0; display: grid; place-items: center; }
.cur { outline: 2px solid #217346; outline-offset: -1px; }
.rec td.endmark { background: linear-gradient(#3b5aa0, #3b5aa0) right bottom / 5px 5px no-repeat; }

.pane { flex: 1; display: flex; min-height: 0; background: #e6e6e6; }
.float .grid { border-right: 1px solid #a6a6a6; }
.vbar { width: 19px; margin: 1px 3px 0; display: flex; flex-direction: column; }
.vbar button, .hbar button { width: 19px; height: 19px; background: #fff; border: 1px solid #777; display: grid; place-items: center; flex: none; color: #666; }
.thumb { background: #fff; border: 1px solid #777; }
.vbar .thumb { flex: 0 1 254px; }
.track { background: #d8d8d8; flex: 1; }

.books { display: flex; flex: none; height: 29px; background: #e6e6e6; border-top: 1px solid #a6a6a6; font: 17px/20px "Noto Sans", "Noto Sans CJK SC", sans-serif; align-items: flex-start; }
.win:not(.float) > .books { height: 15px; overflow: hidden; }
.arrows { display: flex; justify-content: flex-end; gap: 22px; width: 97px; padding: 10px 41px 0 0; color: #b8b8b8; border-right: 1px solid #a6a6a6; height: 24px; flex: none; }
.float .arrows { width: 104px; padding-right: 41px; }
.stab { height: 25px; padding: 0 14px 3px 13px; border-right: 1px solid #a6a6a6; flex: none; margin-top: -1px; }
.stab.on { background: #fff; color: #217346; border-bottom: 2px solid #217346; padding-bottom: 1px; }
.add { margin: 3px 0 0 31px; }
.faded { opacity: .4; }
.books > .dots { margin-left: auto; width: 20px; height: 29px; padding: 7px 0; }
.hbar { display: flex; width: 291px; margin: 4px 25px 0 7px; flex: none; }
.hbar .thumb { flex: 0 0 189px; }
.hbar.wide { width: 901px; margin: 4px 0 0 8px; }
.hbar.wide .thumb { flex: 1; }
.status { display: flex; flex: none; height: 27px; align-items: center; background: #f3f2f1; border-top: 1px solid #d2d0ce; padding: 0 26px 2px 9px; }
.acc { display: flex; align-items: center; gap: 1px; margin-left: 25px; }
.views { display: flex; margin-left: auto; align-self: flex-start; height: 26px; }
.views button { width: 50px; display: grid; place-items: center; }
.views .on { background: #d2d0ce; }
.step { width: 20px; font-size: 19px; font-weight: 300; line-height: 20px; }
.status input { appearance: none; width: 120px; height: 14px; margin: 0 5px 0 3px; background: linear-gradient(#666, #666) center / 100% 1px no-repeat; }
.status input::-webkit-slider-thumb { appearance: none; width: 6px; height: 14px; background: #777; }
.pct { width: 50px; text-align: right; }
.credit { position: absolute; right: 16px; bottom: 9px; font: 19px/24px "Liberation Sans", "Noto Sans CJK SC", sans-serif; color: rgba(110, 110, 110, .75); text-shadow: 1px 1px #fff; }
</style>
